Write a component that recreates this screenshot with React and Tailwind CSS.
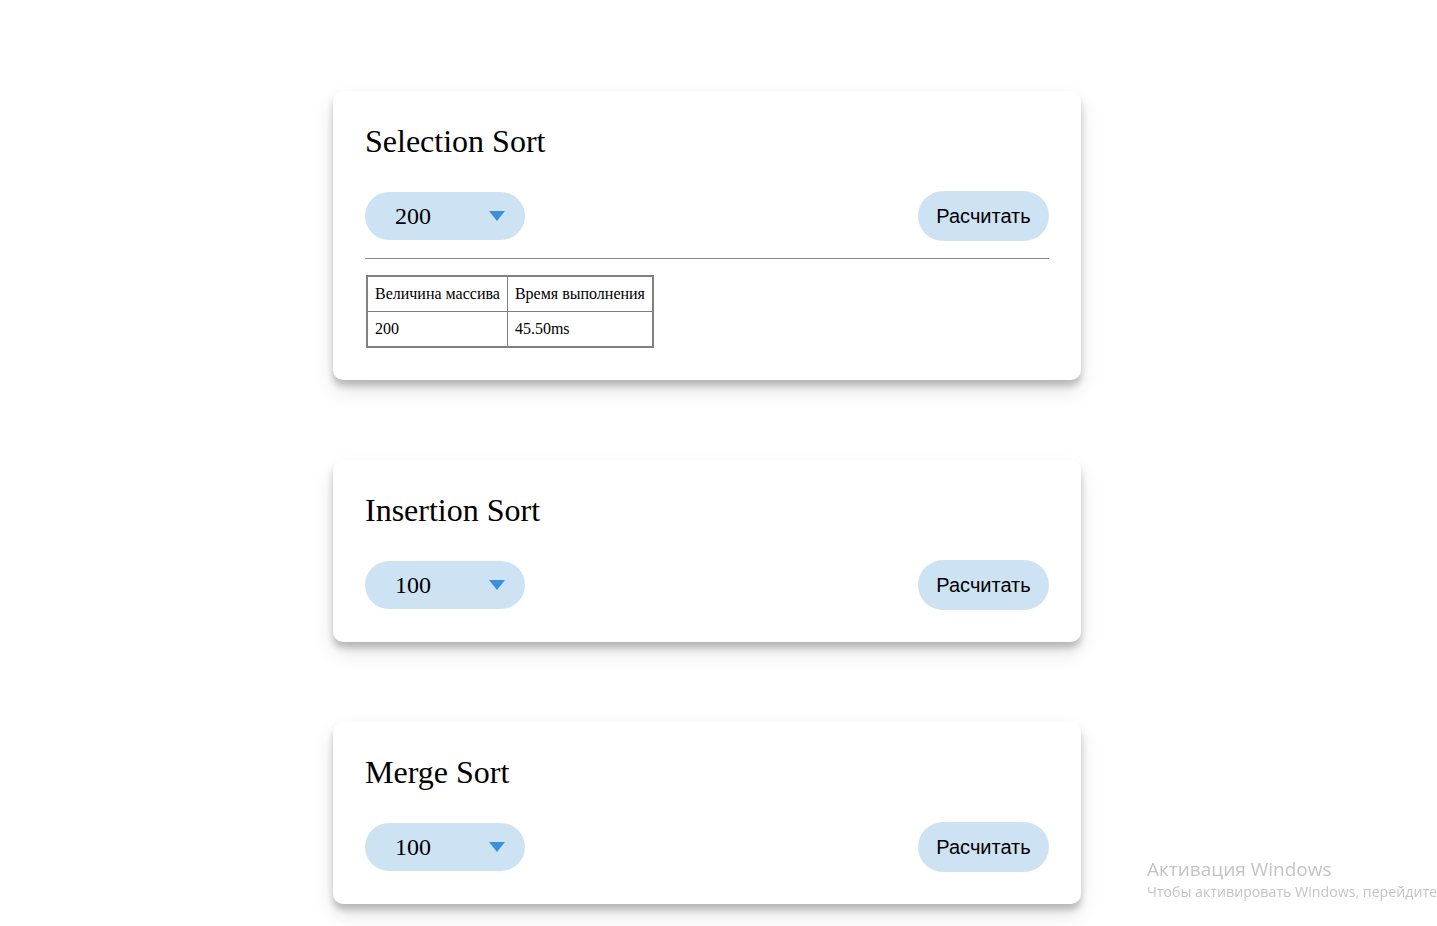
import React, { useState } from 'react';

const sorts = [
    { name: 'Selection Sort', size: 200, results: [{ size: 200, time: '45.50ms' }] },
    { name: 'Insertion Sort', size: 100, results: [] },
    { name: 'Merge Sort', size: 100, results: [] },
];

const serif = { fontFamily: '"Liberation Serif", "Times New Roman", serif' };
const sans = { fontFamily: '"Liberation Sans", Arial, sans-serif' };

const SortCard = ({ sort }) => {
    const [size] = useState(sort.size);

    return (
        <div className="w-[748px] bg-white rounded-[10px] px-8 pt-8 pb-8 shadow-[0_10px_20px_rgba(0,0,0,0.12),0_6px_6px_rgba(0,0,0,0.2)]">
            <h2 className="text-[32px] leading-9 text-black" style={serif}>{sort.name}</h2>

            <div className="mt-8 flex items-center justify-between h-[50px]">
                {/* size select */}
                <div className="w-40 h-12 rounded-full bg-[#cde3f4] flex items-center justify-between pl-[30px] pr-5">
                    <span className="text-2xl text-black" style={serif}>{size}</span>
                    <svg width="16" height="10" viewBox="0 0 16 10">
                        <path d="M0 0 H16 L8 10 Z" fill="#3a90dc" />
                    </svg>
                </div>

                <button className="h-[50px] w-[131px] rounded-full bg-[#cde3f4] text-xl text-black" style={sans}>
                    Расчитать
                </button>
            </div>

            {sort.results.length > 0 && (
                <>
                    <div className="mt-[17px] h-px bg-[#8a8a8a]"></div>
                    <table className="mt-4 ml-px border-collapse border-2 border-[#808080] text-base text-black" style={serif}>
                        <thead>
                            <tr>
                                <td className="border border-[#808080] px-[7px] h-[35px] font-normal">Величина массива</td>
                                <td className="border border-[#808080] px-[7px] h-[35px] font-normal">Время выполнения</td>
                            </tr>
                        </thead>
                        <tbody>
                            {sort.results.map((r, i) => (
                                <tr key={i}>
                                    <td className="border border-[#808080] px-[7px] h-[36px]">{r.size}</td>
                                    <td className="border border-[#808080] px-[7px] h-[36px]">{r.time}</td>
                                </tr>
                            ))}
                        </tbody>
                    </table>
                </>
            )}
        </div>
    );
};

export default function App() {
    return (
        <div className="min-h-[926px] bg-white relative overflow-hidden">
            <div className="flex flex-col items-start gap-20 pt-[91px] pb-10 pl-[333px]">
                {sorts.map(s => <SortCard key={s.name} sort={s} />)}
            </div>

            {/* windows watermark */}
            <div className="fixed left-[1147px] top-[856px] text-[#c4c4c4] whitespace-nowrap" style={{ fontFamily: '"Open Sans", "Noto Sans", sans-serif' }}>
                <div className="text-[19px] leading-[26px]">Активация Windows</div>
                <div className="text-[14.2px] leading-5">Чтобы активировать Windows, перейдите</div>
            </div>
        </div>
    );
}
